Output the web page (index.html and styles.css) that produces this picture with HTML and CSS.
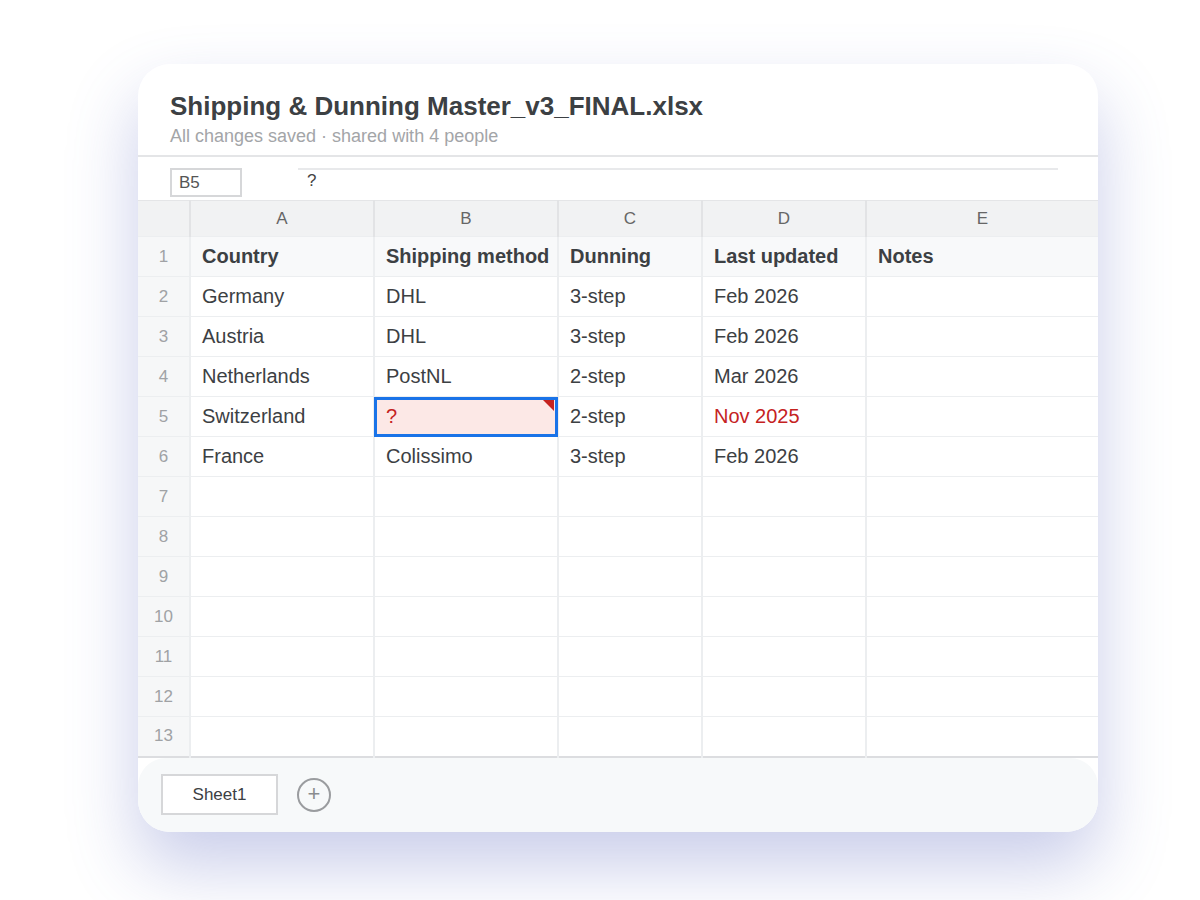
FILE: index.html
```html
<!DOCTYPE html>
<html lang="en">
<head>
  <meta charset="UTF-8">
  <title>Shipping &amp; Dunning Master_v3_FINAL.xlsx</title>
  <meta name="viewport" content="width=device-width, initial-scale=1.0">
  <link rel="stylesheet" href="styles.css">
</head>
<body>

  <div class="sheet-window">
    <!-- file title -->
    <div class="doc-head">
      <h1>Shipping &amp; Dunning Master_v3_FINAL.xlsx</h1>
      <p>All changes saved · shared with 4 people</p>
    </div>

    <!-- name box + formula -->
    <div class="formula-bar">
      <div class="name-box">B5</div>
      <div class="formula">?</div>
    </div>

    <table class="grid">
      <colgroup>
        <col class="c-num">
        <col class="c-a">
        <col class="c-b">
        <col class="c-c">
        <col class="c-d">
        <col class="c-e">
      </colgroup>
      <tr class="col-head">
        <th></th><th>A</th><th>B</th><th>C</th><th>D</th><th>E</th>
      </tr>
      <tr class="title-row">
        <th>1</th><td>Country</td><td>Shipping method</td><td>Dunning</td><td>Last updated</td><td>Notes</td>
      </tr>
      <tr>
        <th>2</th><td>Germany</td><td>DHL</td><td>3-step</td><td>Feb 2026</td><td></td>
      </tr>
      <tr>
        <th>3</th><td>Austria</td><td>DHL</td><td>3-step</td><td>Feb 2026</td><td></td>
      </tr>
      <tr>
        <th>4</th><td>Netherlands</td><td>PostNL</td><td>2-step</td><td>Mar 2026</td><td></td>
      </tr>
      <tr>
        <th>5</th><td>Switzerland</td><td class="selected">?<span class="flag"></span></td><td>2-step</td><td class="stale">Nov 2025</td><td></td>
      </tr>
      <tr>
        <th>6</th><td>France</td><td>Colissimo</td><td>3-step</td><td>Feb 2026</td><td></td>
      </tr>
      <tr><th>7</th><td></td><td></td><td></td><td></td><td></td></tr>
      <tr><th>8</th><td></td><td></td><td></td><td></td><td></td></tr>
      <tr><th>9</th><td></td><td></td><td></td><td></td><td></td></tr>
      <tr><th>10</th><td></td><td></td><td></td><td></td><td></td></tr>
      <tr><th>11</th><td></td><td></td><td></td><td></td><td></td></tr>
      <tr><th>12</th><td></td><td></td><td></td><td></td><td></td></tr>
      <tr><th>13</th><td></td><td></td><td></td><td></td><td></td></tr>
    </table>

    <!-- sheet tabs -->
    <div class="tabs">
      <div class="tab">Sheet1</div>
      <div class="add-tab">+</div>
    </div>
  </div>

</body>
</html>
```

FILE: styles.css
```css
* {
  box-sizing: border-box;
  font-family: "Liberation Sans", Arial, sans-serif;
}
body {
  margin: 0;
  padding: 64px 0 68px 138px;
  min-height: 900px;
  background: #fff;
  color: #3c4043;
}
.sheet-window {
  width: 960px;
  height: 768px;
  background: #fff;
  border-radius: 32px;
  overflow: hidden;
  box-shadow: 0 34px 70px rgba(88, 98, 190, 0.32);
  display: flex;
  flex-direction: column;
}
.doc-head {
  padding: 27px 32px 0;
  border-bottom: 2px solid #e4e5e7;
  height: 93px;
}
.doc-head h1 {
  margin: 0;
  font-size: 26px;
  line-height: 30px;
  font-weight: bold;
  color: #3c4043;
}
.doc-head p {
  margin: 5px 0 0;
  font-size: 18px;
  line-height: 20px;
  color: #a3a5a8;
}
.formula-bar {
  display: flex;
  align-items: flex-start;
  height: 43px;
  padding: 11px 40px 0 32px;
}
.name-box {
  width: 72px;
  height: 29px;
  border: 2px solid #d6d7d9;
  padding: 2px 0 0 7px;
  font-size: 17px;
  line-height: 22px;
  color: #555;
}
.formula {
  flex: 1;
  margin-left: 56px;
  border-top: 2px solid #e8e9eb;
  padding: 0 0 0 9px;
  font-size: 17px;
  line-height: 22px;
  color: #444;
}
.grid {
  border-collapse: collapse;
  table-layout: fixed;
  width: 960px;
  border-bottom: 2px solid #dcdde0;
}
.c-num { width: 52px; }
.c-a { width: 184px; }
.c-b { width: 184px; }
.c-c { width: 144px; }
.c-d { width: 164px; }
.c-e { width: 232px; }
.grid th,
.grid td {
  height: 40px;
  padding: 0 0 0 11px;
  border-top: 1px solid #eceef0;
  border-left: 2px solid #eceef0;
  font-size: 20px;
  text-align: left;
  font-weight: normal;
  color: #3c4043;
  white-space: nowrap;
}
.grid th:first-child,
.grid td:first-child {
  border-left: none;
}
.grid tr > th:first-child {
  padding: 0;
  text-align: center;
  background: #f6f7f8;
  color: #a0a2a5;
  font-size: 17px;
}
.col-head th {
  height: 36px;
  background: #f1f2f3 !important;
  color: #666 !important;
  text-align: center !important;
  padding: 0 !important;
  font-size: 17px !important;
  border-top: 1px solid #e4e5e7;
  border-left-color: #e2e3e5;
}
.title-row td {
  background: #f8f9fa;
  font-weight: bold;
}
.grid td.selected {
  position: relative;
  background: #fce8e6;
  color: #c5221f;
  outline: 3px solid #1a73e8;
  outline-offset: -3px;
}
.flag {
  position: absolute;
  top: 3px;
  right: 3px;
  width: 0;
  height: 0;
  border-top: 11px solid #c5221f;
  border-left: 11px solid transparent;
}
.grid td.stale {
  color: #c5221f;
}
.tabs {
  flex: 1;
  display: flex;
  align-items: center;
  gap: 19px;
  padding: 0 0 0 23px;
  background: #f7f9fa;
  border-radius: 28px;
}
.tab {
  width: 117px;
  height: 41px;
  background: #fff;
  border: 2px solid #d6d7d9;
  text-align: center;
  font-size: 17px;
  line-height: 37px;
  color: #3c4043;
}
.add-tab {
  width: 34px;
  height: 34px;
  border: 2px solid #9a9c9f;
  border-radius: 50%;
  text-align: center;
  font-size: 22px;
  line-height: 28px;
  color: #8a8c8f;
}
```
